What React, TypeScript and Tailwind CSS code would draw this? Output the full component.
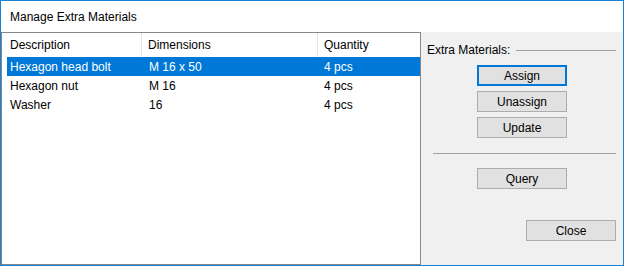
import React from "react";

const rows = [
  { d: "Hexagon head bolt", m: "M 16 x 50", q: "4 pcs" },
  { d: "Hexagon nut", m: "M 16", q: "4 pcs" },
  { d: "Washer", m: "16", q: "4 pcs" },
];

function Btn({ label, focused }: { label: string; focused?: boolean }) {
  return (
    <div
      className={
        "w-[90px] h-[21px] flex items-center justify-center bg-[#e1e1e1] text-black " +
        (focused ? "border-2 border-[#0078d7]" : "border border-[#adadad]")
      }
    >
      {label}
    </div>
  );
}

export default function App() {
  return (
    <div
      className="w-[624px] h-[266px] border border-[#1a82d4] bg-white flex flex-col text-[12px] leading-none text-black"
      style={{ fontFamily: '"Liberation Sans", Arial, sans-serif' }}
    >
      <div className="h-[31px] flex items-center pl-[9px] shrink-0">Manage Extra Materials</div>
      <div className="flex flex-1 min-h-0">
        <div className="w-[420px] border border-[#828790] bg-white flex flex-col">
          <div className="h-[24px] flex items-stretch shrink-0">
            <div className="w-[140px] flex items-center pl-[8px] border-r border-[#e5e5e5]">Description</div>
            <div className="w-[176px] flex items-center pl-[6px] border-r border-[#e5e5e5]">Dimensions</div>
            <div className="flex-1 flex items-center pl-[6px]">Quantity</div>
          </div>
          <div className="flex flex-col pl-[5px]">
            {rows.map((r, i) => (
              <div
                key={i}
                className={
                  "h-[19px] flex items-center " +
                  (i === 0 ? "bg-[#0078d7] text-white" : "")
                }
              >
                <div className="w-[135px] pl-[3px]">{r.d}</div>
                <div className="w-[176px] pl-[7px]">{r.m}</div>
                <div className="flex-1 pl-[6px]">{r.q}</div>
              </div>
            ))}
          </div>
        </div>
        <div className="flex-1 bg-[#f0f0f0] flex flex-col pt-[10px] pr-[7px]">
          <div className="h-[16px] flex items-center pl-[6px]">
            <span>Extra Materials:</span>
            <div className="flex-1 h-px bg-[#a0a0a0] ml-[6px]" />
          </div>
          <div className="flex flex-col gap-[5px] mt-[7px] pl-[56px]">
            <Btn label="Assign" focused />
            <Btn label="Unassign" />
            <Btn label="Update" />
          </div>
          <div className="h-px bg-[#a0a0a0] ml-[12px] mt-[15px]" />
          <div className="pl-[56px] mt-[14px]">
            <Btn label="Query" />
          </div>
          <div className="flex justify-end mt-[31px]">
            <Btn label="Close" />
          </div>
        </div>
      </div>
    </div>
  );
}
